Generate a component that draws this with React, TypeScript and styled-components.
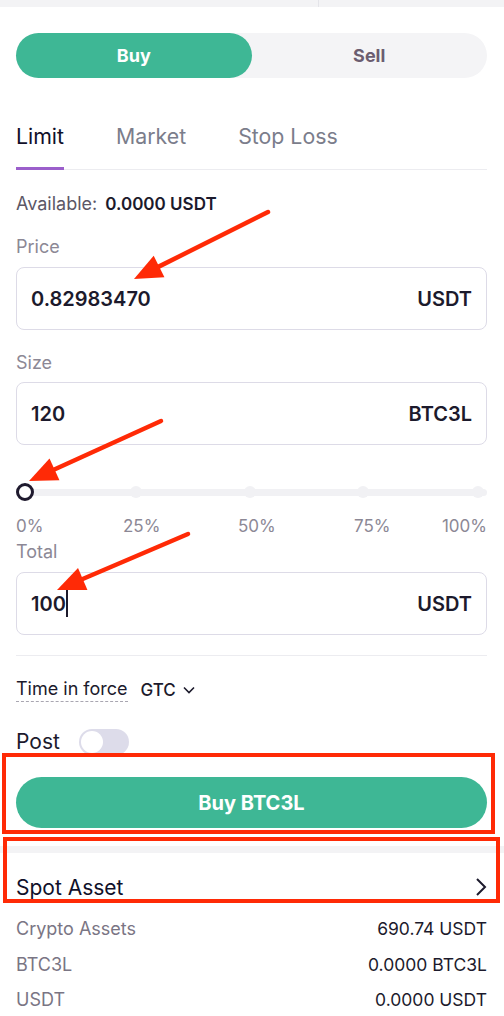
import React from 'react';
import styled, { createGlobalStyle } from 'styled-components';

const GlobalStyle = createGlobalStyle`
  body {
    margin: 0;
    background: #ffffff;
    font-family: 'Inter', 'Liberation Sans', sans-serif;
    color: #1c1a2c;
  }
  * {
    box-sizing: border-box;
  }
`;

const Page = styled.div`
  position: relative;
  width: 504px;
  height: 1016px;
  overflow: hidden;
`;

const TopBand = styled.div`
  display: flex;
  height: 7px;
  background: #f3f3f5;
`;

const TopHalf = styled.div<{ $divider?: boolean }>`
  width: ${props => (props.$divider ? '319px' : 'auto')};
  flex: ${props => (props.$divider ? 'none' : '1')};
  border-right: ${props => (props.$divider ? '1px solid #e4e4e9' : 'none')};
`;

const Card = styled.div`
  padding: 0 17px 0 16px;
  background: #ffffff;
  border-top-right-radius: 6px;
`;

const Side = styled.div`
  display: grid;
  grid-template-columns: 1fr 1fr;
  height: 45px;
  margin-top: 26px;
  border-radius: 23px;
  background: #f4f4f6;
`;

const SideButton = styled.div<{ $active?: boolean }>`
  display: flex;
  align-items: center;
  justify-content: center;
  border-radius: 23px;
  font-size: 18px;
  font-weight: 700;
  background: ${props => (props.$active ? '#3eb795' : 'transparent')};
  color: ${props => (props.$active ? '#ffffff' : '#6b5d70')};
`;

const Tabs = styled.div`
  display: flex;
  gap: 52px;
  margin-top: 46px;
  border-bottom: 1px solid #ececf0;
`;

const Tab = styled.div<{ $active?: boolean }>`
  font-size: 21.3px;
  line-height: 24px;
  padding-bottom: 19px;
  border-bottom: 3px solid ${props => (props.$active ? '#9b5fcb' : 'transparent')};
  margin-bottom: -1px;
  color: ${props => (props.$active ? '#10102a' : '#7b7d8b')};
`;

const Available = styled.div`
  display: flex;
  align-items: baseline;
  gap: 8px;
  margin-top: 24px;
  font-size: 18px;
  line-height: 20px;
  color: #5c5766;
`;

const Amount = styled.span`
  font-size: 17px;
  color: #1c1a2c;
  font-weight: 600;
`;

const FieldLabel = styled.div<{ $top: number }>`
  margin-top: ${props => props.$top}px;
  font-size: 18px;
  line-height: 20px;
  color: #8c8895;
`;

const Field = styled.div<{ $top?: number }>`
  display: flex;
  align-items: center;
  justify-content: space-between;
  height: 63px;
  margin-top: ${props => props.$top ?? 10}px;
  padding: 0 14px;
  border: 1px solid #dddbe7;
  border-radius: 8px;
  font-size: 20px;
  font-weight: 600;
  color: #1c1a2c;
`;

const Value = styled.span`
  display: flex;
  align-items: center;
`;

const Caret = styled.i`
  display: inline-block;
  width: 2px;
  height: 27px;
  background: #1c1a2c;
`;

const Slider = styled.div`
  height: 20px;
  margin-top: 37px;
  display: flex;
  align-items: center;
`;

const Track = styled.div`
  flex: 1;
  height: 7px;
  border-radius: 4px;
  background: #f1f1f4;
  display: flex;
  align-items: center;
`;

const Stop = styled.div<{ $current?: boolean; $offset: number }>`
  flex: none;
  margin-left: ${props => props.$offset}px;
  width: ${props => (props.$current ? '18px' : '12px')};
  height: ${props => (props.$current ? '18px' : '12px')};
  border-radius: 50%;
  background: ${props => (props.$current ? '#ffffff' : '#f1f1f4')};
  border: ${props => (props.$current ? '3px solid #1f1a2e' : 'none')};
`;

const Marks = styled.div`
  display: grid;
  grid-template-columns: 107px 115px 116px 86px 1fr;
  margin-top: 14px;
  font-size: 17px;
  line-height: 20px;
  color: #8c8895;
`;

const Mark = styled.span<{ $end?: boolean }>`
  text-align: ${props => (props.$end ? 'right' : 'left')};
`;

const Divider = styled.div`
  height: 1px;
  margin-top: 20px;
  background: #ececf0;
`;

const OptionRow = styled.div<{ $top: number; $gap: number }>`
  display: flex;
  align-items: center;
  gap: ${props => props.$gap}px;
  margin-top: ${props => props.$top}px;
`;

const Hint = styled.span<{ $big?: boolean }>`
  font-size: ${props => (props.$big ? '21px' : '18px')};
  line-height: 24px;
  color: #1c1a2c;
  border-bottom: 1px dashed ${props => (props.$big ? '#e2e1e8' : '#a9a6b1')};
`;

const Select = styled.span`
  display: flex;
  align-items: center;
  gap: 6px;
  font-size: 17px;
  font-weight: 500;
  color: #1c1a2c;
`;

const Switch = styled.div`
  width: 50px;
  height: 26px;
  border-radius: 13px;
  background: #dddcea;
  padding: 2px;
`;

const Knob = styled.div`
  width: 22px;
  height: 22px;
  border-radius: 50%;
  background: #ffffff;
`;

const Submit = styled.div`
  display: flex;
  align-items: center;
  justify-content: center;
  height: 51px;
  margin-top: 22px;
  border-radius: 26px;
  background: #3eb795;
  color: #ffffff;
  font-size: 20px;
  font-weight: 700;
`;

const Gap = styled.div`
  height: 7px;
  margin-top: 18px;
  background: #f3f3f5;
`;

const Assets = styled.div`
  padding: 0 17px 0 16px;
`;

const AssetHead = styled.div`
  display: flex;
  align-items: center;
  justify-content: space-between;
  height: 48px;
  margin-top: 10px;
  font-size: 21px;
  color: #10102a;
`;

const AssetRow = styled.div`
  display: flex;
  justify-content: space-between;
  height: 35.5px;
  align-items: center;
  font-size: 17.5px;
  color: #1c1a2c;
`;

const AssetName = styled.span`
  font-size: 18px;
  color: #7a7584;
`;

const Overlay = styled.svg`
  position: absolute;
  left: 0;
  top: 0;
  pointer-events: none;
`;

const RED = '#ff2a06';

const Arrow = ({ x1, y1, x2, y2 }: { x1: number; y1: number; x2: number; y2: number }) => {
  const dx = x2 - x1;
  const dy = y2 - y1;
  const len = Math.hypot(dx, dy);
  const ux = dx / len;
  const uy = dy / len;
  const head = 28;
  const half = 12;
  const bx = x2 - ux * head;
  const by = y2 - uy * head;
  return (
    <g>
      <line x1={x1} y1={y1} x2={bx + ux * 2} y2={by + uy * 2} stroke={RED} strokeWidth={4.5} strokeLinecap="round" />
      <polygon
        points={`${x2},${y2} ${bx - uy * half},${by + ux * half} ${bx + uy * half},${by - ux * half}`}
        fill={RED}
      />
    </g>
  );
};

const Chevron = ({ dir }: { dir: 'down' | 'right' }) =>
  dir === 'down' ? (
    <svg width="14" height="10" viewBox="0 0 14 10">
      <path d="M2 2.5 L7 7.5 L12 2.5" fill="none" stroke="#1c1a2c" strokeWidth="1.6" />
    </svg>
  ) : (
    <svg width="12" height="20" viewBox="0 0 12 20">
      <path d="M2 2 L10 10 L2 18" fill="none" stroke="#1c1a2c" strokeWidth="2" />
    </svg>
  );

// gap before each stop on the track, px
const stops = [
  { pct: 0, offset: 0 },
  { pct: 25, offset: 96 },
  { pct: 50, offset: 102 },
  { pct: 75, offset: 101 },
  { pct: 100, offset: 103 },
];

const App = () => (
  <Page>
    <GlobalStyle />
    <TopBand>
      <TopHalf $divider />
      <TopHalf />
    </TopBand>
    <Card>
      <Side>
        <SideButton $active>Buy</SideButton>
        <SideButton>Sell</SideButton>
      </Side>

      <Tabs>
        <Tab $active>Limit</Tab>
        <Tab>Market</Tab>
        <Tab>Stop Loss</Tab>
      </Tabs>

      <Available>
        Available:<Amount>0.0000 USDT</Amount>
      </Available>

      <FieldLabel $top={23}>Price</FieldLabel>
      <Field>
        <Value>0.82983470</Value>
        <span>USDT</span>
      </Field>

      <FieldLabel $top={23}>Size</FieldLabel>
      <Field $top={9}>
        <Value>120</Value>
        <span>BTC3L</span>
      </Field>

      <Slider>
        <Track>
          {stops.map(s => (
            <Stop key={s.pct} $offset={s.offset} $current={s.pct === 0} />
          ))}
        </Track>
      </Slider>
      <Marks>
        {stops.map(s => (
          <Mark key={s.pct} $end={s.pct === 100}>
            {s.pct}%
          </Mark>
        ))}
      </Marks>

      <FieldLabel $top={6}>Total</FieldLabel>
      <Field>
        <Value>
          100
          <Caret />
        </Value>
        <span>USDT</span>
      </Field>

      <Divider />

      <OptionRow $top={21} $gap={13}>
        <Hint>Time in force</Hint>
        <Select>
          GTC <Chevron dir="down" />
        </Select>
      </OptionRow>

      <OptionRow $top={27} $gap={19}>
        <Hint $big>Post</Hint>
        <Switch>
          <Knob />
        </Switch>
      </OptionRow>

      <Submit>Buy BTC3L</Submit>
    </Card>

    <Gap />

    <Assets>
      <AssetHead>
        <span>Spot Asset</span>
        <Chevron dir="right" />
      </AssetHead>
      <AssetRow>
        <AssetName>Crypto Assets</AssetName>
        <span>690.74 USDT</span>
      </AssetRow>
      <AssetRow>
        <AssetName>BTC3L</AssetName>
        <span>0.0000 BTC3L</span>
      </AssetRow>
      <AssetRow>
        <AssetName>USDT</AssetName>
        <span>0.0000 USDT</span>
      </AssetRow>
    </Assets>

    <Overlay width="504" height="1016" viewBox="0 0 504 1016">
      <rect x="4" y="755" width="489" height="77" fill="none" stroke={RED} strokeWidth="4" />
      <rect x="5" y="839" width="493" height="62" fill="none" stroke={RED} strokeWidth="4" />
      <Arrow x1={268} y1={212} x2={134} y2={279} />
      <Arrow x1={161} y1={421} x2={29} y2={481} />
      <Arrow x1={188} y1={534} x2={57} y2={590} />
    </Overlay>
  </Page>
);

export default App;
